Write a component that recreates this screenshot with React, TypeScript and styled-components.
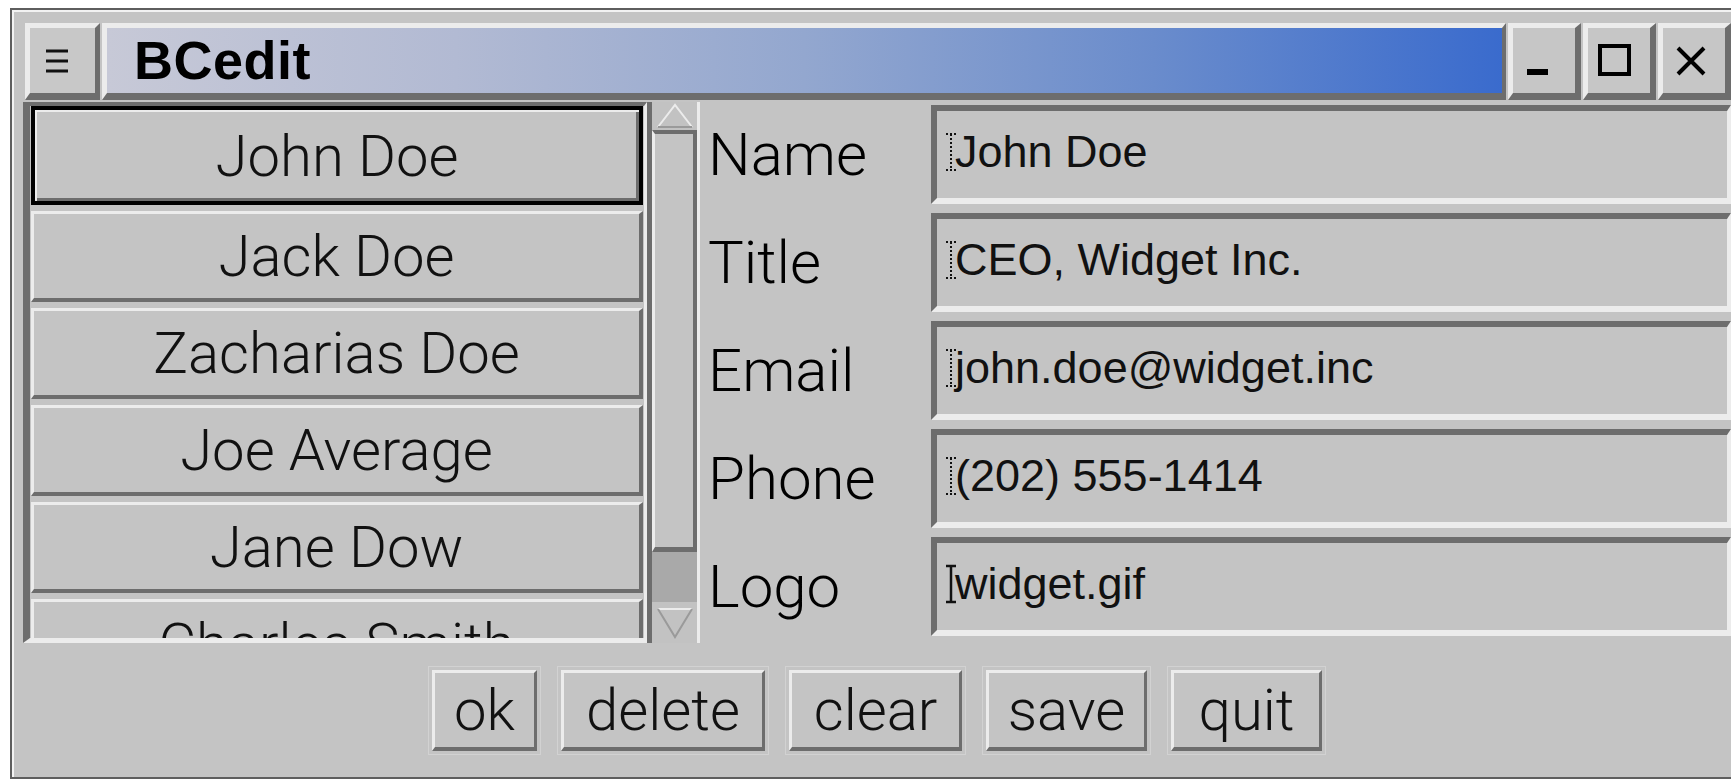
import { Fragment } from 'react';
import styled, { createGlobalStyle, css } from 'styled-components';

const GRAY = '#c4c4c4';
const LIGHT = '#ececec';
const DARK = '#6d6d6d';

const GlobalStyle = createGlobalStyle`
  html, body {
    margin: 0;
    padding: 0;
    background: #fff;
    overflow: hidden;
  }
  body {
    font-family: "Liberation Sans", Arial, sans-serif;
    color: #111;
  }
`;

const raised = (top: number, right: number, bottom: number, left: number) => css`
  box-sizing: border-box;
  border-style: solid;
  border-width: ${top}px ${right}px ${bottom}px ${left}px;
  border-color: ${LIGHT} ${DARK} ${DARK} ${LIGHT};
`;

const sunken = (top: number, right: number, bottom: number, left: number) => css`
  box-sizing: border-box;
  border-style: solid;
  border-width: ${top}px ${right}px ${bottom}px ${left}px;
  border-color: ${DARK} ${LIGHT} ${LIGHT} ${DARK};
`;

const Window = styled.div`
  box-sizing: border-box;
  margin: 8px 0 0 10px;
  width: 1741px;
  height: 771px;
  background: ${GRAY};
  border: 2px solid #5e5e5e;
  box-shadow: inset 2px 2px 0 #f2f2f2;
  padding: 13px 18px 0 11px;
  display: flex;
  flex-direction: column;
  overflow: hidden;
`;

const TitleBar = styled.div`
  display: flex;
  gap: 2px;
  height: 77px;
  margin-left: 2px;
  flex-shrink: 0;
`;

const MenuButton = styled.div`
  ${raised(5, 5, 7, 5)};
  width: 75px;
  background: #c8c8c8;
  display: flex;
  align-items: center;
  justify-content: center;
  padding-right: 12px;
`;

const TitleArea = styled.div`
  ${raised(5, 4, 7, 5)};
  flex: 1;
  display: flex;
  align-items: center;
  padding: 0 0 2px 27px;
  background: linear-gradient(90deg, #c7c9d7 0%, #b2bad3 25%, #93a7cf 50%, #6a8ccc 75%, #3a6bcd 100%);
`;

const TitleText = styled.span`
  font-family: "Liberation Sans", Arial, sans-serif;
  font-weight: 700;
  font-size: 54px;
  color: #000;
  letter-spacing: 0.5px;
`;

const FrameButton = styled.div<{ $align?: string }>`
  ${raised(5, 6, 7, 5)};
  width: 73px;
  background: #c6c6c6;
  display: flex;
  align-items: ${(p) => p.$align ?? 'center'};
  justify-content: center;
`;

const Body = styled.div`
  display: flex;
  margin-top: 2px;
  height: 541px;
  flex-shrink: 0;
`;

const ListFrame = styled.div`
  ${sunken(4, 3, 5, 7)};
  width: 624px;
  padding: 0 1px;
  display: flex;
  flex-direction: column;
  overflow: hidden;
`;

const ListItem = styled.div<{ $selected?: boolean }>`
  box-sizing: border-box;
  flex-shrink: 0;
  display: flex;
  align-items: center;
  justify-content: center;
  font-family: Roboto, "Liberation Sans", sans-serif;
  font-weight: 300;
  font-size: 58px;
  background: ${GRAY};
  ${(p) =>
    p.$selected
      ? css`
          height: 99px;
          border: 4px solid #000;
          box-shadow: inset 2px 2px 0 ${LIGHT}, inset -3px -3px 0 ${DARK};
        `
      : css`
          ${raised(3, 4, 4, 3)};
          height: 91px;
          margin-top: 6px;
        `}
`;

const ScrollBar = styled.div`
  box-sizing: border-box;
  width: 53px;
  display: flex;
  flex-direction: column;
  border-left: 5px solid ${DARK};
  border-right: 3px solid ${LIGHT};
  background: #a9a9a9;
`;

const ScrollArrow = styled.div<{ $h: number }>`
  height: ${(p) => p.$h}px;
  background: #c2c2c2;
  display: flex;
  align-items: center;
  justify-content: center;
  flex-shrink: 0;
`;

const Thumb = styled.div`
  box-sizing: border-box;
  height: 422px;
  background: ${GRAY};
  border-top: 4px solid ${DARK};
  border-bottom: 5px solid ${DARK};
  border-left: 3px solid ${LIGHT};
  border-right: 4px solid ${DARK};
  flex-shrink: 0;
`;

const Trough = styled.div`
  flex: 1;
`;

const Form = styled.div`
  flex: 1;
  display: grid;
  grid-template-columns: 231px 1fr;
  grid-auto-rows: 99px;
  row-gap: 9px;
  padding-top: 3px;
  align-content: start;
`;

const Label = styled.div`
  display: flex;
  align-items: center;
  padding-left: 8px;
  font-family: Roboto, "Liberation Sans", sans-serif;
  font-weight: 300;
  font-size: 60px;
  color: #000;
`;

const Field = styled.div`
  ${sunken(6, 4, 6, 6)};
  display: flex;
  align-items: center;
  padding: 0 0 6px 8px;
  font-family: "Liberation Sans", Arial, sans-serif;
  font-size: 45px;
  color: #111;
  background: ${GRAY};
  white-space: nowrap;
`;

const Caret = styled.svg`
  flex-shrink: 0;
  margin-right: -2px;
`;

const ButtonBar = styled.div`
  flex: 1;
  display: flex;
  justify-content: center;
  align-items: flex-start;
  gap: 24px;
  padding-top: 27px;
`;

const PushButton = styled.button<{ $w: number }>`
  ${raised(3, 3, 4, 3)};
  width: ${(p) => p.$w}px;
  height: 81px;
  padding: 0;
  background: ${GRAY};
  box-shadow: 0 0 0 3px ${GRAY}, 0 0 0 4px #d2d2d2;
  font-family: Roboto, "Liberation Sans", sans-serif;
  font-weight: 300;
  font-size: 58px;
  color: #111;
  display: flex;
  align-items: center;
  justify-content: center;
`;

// text insertion cursor: dotted when idle, solid in the focused entry
function IBeam({ solid }: { solid?: boolean }) {
  return (
    <Caret width="12" height="40" viewBox="0 0 12 40">
      <g
        stroke="#111"
        strokeWidth={solid ? 2.5 : 2}
        strokeDasharray={solid ? undefined : '2 2'}
        fill="none"
      >
        <path d="M6 2V38" />
        <path d="M1 2H11M1 38H11" />
      </g>
    </Caret>
  );
}

const people = ['John Doe', 'Jack Doe', 'Zacharias Doe', 'Joe Average', 'Jane Dow', 'Charles Smith'];

const fields = [
  { label: 'Name', value: 'John Doe' },
  { label: 'Title', value: 'CEO, Widget Inc.' },
  { label: 'Email', value: 'john.doe@widget.inc' },
  { label: 'Phone', value: '(202) 555-1414' },
  { label: 'Logo', value: 'widget.gif', focused: true },
];

const actions = [
  { text: 'ok', w: 105 },
  { text: 'delete', w: 204 },
  { text: 'clear', w: 173 },
  { text: 'save', w: 161 },
  { text: 'quit', w: 151 },
];

export default function App() {
  return (
    <>
      <GlobalStyle />
      <Window>
        <TitleBar>
          <MenuButton>
            <svg width="26" height="26" viewBox="0 0 26 26">
              <path d="M2 3H24M2 13H24M2 23H24" stroke="#111" strokeWidth="3" />
            </svg>
          </MenuButton>
          <TitleArea>
            <TitleText>BCedit</TitleText>
          </TitleArea>
          <FrameButton $align="flex-end">
            <svg width="30" height="30" viewBox="0 0 30 30" style={{ marginBottom: 14, marginRight: 12 }}>
              <rect x="4" y="20" width="21" height="6" fill="#000" />
            </svg>
          </FrameButton>
          <FrameButton>
            <svg width="36" height="36" viewBox="0 0 36 36" style={{ marginRight: 8 }}>
              <rect x="3" y="3" width="29" height="28" fill="none" stroke="#000" strokeWidth="4" />
            </svg>
          </FrameButton>
          <FrameButton>
            <svg width="34" height="32" viewBox="0 0 34 32" style={{ marginRight: 6 }}>
              <path d="M4 3L30 29M30 3L4 29" stroke="#000" strokeWidth="4" />
            </svg>
          </FrameButton>
        </TitleBar>

        <Body>
          <ListFrame>
            {people.map((name, i) => (
              <ListItem key={name} $selected={i === 0}>
                {name}
              </ListItem>
            ))}
          </ListFrame>

          <ScrollBar>
            <ScrollArrow $h={28}>
              <svg width="40" height="26" viewBox="0 0 40 26">
                <path d="M3 24L20 2L37 24" fill="none" stroke="#ececec" strokeWidth="2" />
                <path d="M3 24H37" stroke="#9a9a9a" strokeWidth="2" />
              </svg>
            </ScrollArrow>
            <Thumb />
            <Trough />
            <ScrollArrow $h={41}>
              <svg width="40" height="34" viewBox="0 0 40 34">
                <path d="M3 3H37" stroke="#ececec" strokeWidth="2" />
                <path d="M3 3L20 31L37 3" fill="none" stroke="#9a9a9a" strokeWidth="2" />
              </svg>
            </ScrollArrow>
          </ScrollBar>

          <Form>
            {fields.map((f) => (
              <Fragment key={f.label}>
                <Label>{f.label}</Label>
                <Field>
                  <IBeam solid={f.focused} />
                  {f.value}
                </Field>
              </Fragment>
            ))}
          </Form>
        </Body>

        <ButtonBar>
          {actions.map((a) => (
            <PushButton key={a.text} $w={a.w}>
              {a.text}
            </PushButton>
          ))}
        </ButtonBar>
      </Window>
    </>
  );
}
